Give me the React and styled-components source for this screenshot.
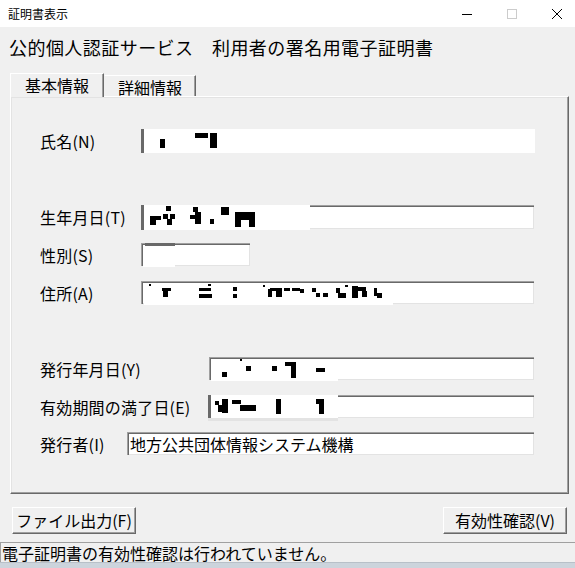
import React from "react";
import styled, { createGlobalStyle } from "styled-components";

const Global = createGlobalStyle`
  html, body { margin: 0; padding: 0; background: #f0f0f0; }
  body { font-family: "Noto Sans CJK JP", "Noto Sans", sans-serif; }
  * { box-sizing: border-box; }
`;

const Window = styled.div`
  width: 575px;
  height: 568px;
  display: flex;
  flex-direction: column;
  overflow: hidden;
  background: #f0f0f0;
  color: #000;
`;

const TitleBar = styled.div`
  height: 27px;
  flex: none;
  background: #fff;
  display: flex;
  align-items: center;
  justify-content: space-between;
  padding: 0 13px 0 8px;
`;

const TitleText = styled.span`
  font-size: 12px;
  line-height: 14px;
  color: #000;
`;

const Controls = styled.div`
  display: flex;
  align-items: center;
  gap: 35px;
`;

const CtlIcon = styled.svg`
  width: 10px;
  height: 10px;
  display: block;
`;

const Heading = styled.h1`
  margin: 0;
  padding: 9px 0 0 9px;
  height: 46px;
  font-size: 18px;
  line-height: 22px;
  font-weight: 400;
  letter-spacing: 0.45px;
  white-space: nowrap;
`;

const TabRow = styled.div`
  display: flex;
  align-items: flex-end;
  margin-left: 10px;
  height: 23px;
  flex: none;
`;

const Tab = styled.div`
  position: relative;
  z-index: ${(p) => (p.$active ? 2 : 1)};
  width: ${(p) => p.$w}px;
  height: ${(p) => (p.$active ? 24 : 21)}px;
  margin-bottom: ${(p) => (p.$active ? -1 : 0)}px;
  background: #f0f0f0;
  border-top: 1px solid #fff;
  border-left: 1px solid ${(p) => (p.$active ? "#fff" : "#f0f0f0")};
  box-shadow: inset -1px 0 #a0a0a0;
  border-right: 1px solid #696969;
  font-size: 16px;
  line-height: 18px;
  display: flex;
  justify-content: center;
  padding-top: 2px;
`;

const Panel = styled.div`
  margin-left: 10px;
  width: 559px;
  height: 398px;
  flex: none;
  border-top: 1px solid #fff;
  border-left: 1px solid #fff;
  border-right: 1px solid #696969;
  border-bottom: 1px solid #696969;
  box-shadow: inset -1px -1px #a0a0a0, inset 1px 1px #e3e3e3;
  padding-left: 29px;
  display: flex;
  flex-direction: column;
`;

const Row = styled.div`
  display: flex;
  align-items: center;
  margin-top: ${(p) => p.$mt}px;
  height: ${(p) => p.$h}px;
`;

const Label = styled.div`
  width: ${(p) => p.$w}px;
  flex: none;
  font-size: 16px;
  line-height: 18px;
  letter-spacing: 0.2px;
  white-space: nowrap;
`;

const Field = styled.div`
  position: relative;
  width: ${(p) => p.$w}px;
  height: 100%;
  background: #fff;
  box-shadow: ${(p) =>
    p.$plain
      ? "none"
      : "inset 1px 1px #a0a0a0, inset 2px 2px #696969, inset -1px -1px #e3e3e3"};
  font-size: 16px;
  line-height: 18px;
  padding: 3px 0 0 3px;
  white-space: nowrap;
`;

const Mask = styled.div`
  position: absolute;
  background: #fff;
`;

const Bar = styled.div`
  position: absolute;
  background: ${(p) => p.$c};
`;

const Block = styled.div`
  position: absolute;
  background: #000;
`;

const ButtonRow = styled.div`
  display: flex;
  justify-content: space-between;
  padding: 0 8px 0 12px;
  margin-top: 13px;
  height: 27px;
  flex: none;
`;

const Button = styled.div`
  width: 124px;
  height: 27px;
  background: #f0f0f0;
  border-top: 1px solid #fff;
  border-left: 1px solid #fff;
  border-right: 1px solid #696969;
  border-bottom: 1px solid #696969;
  box-shadow: inset -1px -1px #a0a0a0;
  font-size: 16px;
  line-height: 18px;
  display: flex;
  align-items: center;
  justify-content: center;
  padding-bottom: 1px;
  white-space: nowrap;
`;

const StatusBar = styled.div`
  margin-top: 8px;
  height: 20px;
  flex: none;
  border-top: 1px solid #a0a0a0;
  border-left: 1px solid #a0a0a0;
  font-size: 16px;
  line-height: 18px;
  padding: 1px 0 0 1px;
  white-space: nowrap;
`;

const Strip = styled.div`
  flex: 1;
  background: #ccd4dc;
  border-top: 1px solid #b8c0c8;
`;

const fields = [
  {
    label: "氏名(N)", x: 141, y: 129, w: 394, h: 24, mt: 32, plain: true,
    masks: [{ x: 141, y: 129, w: 394, h: 24, bars: [{ x: 141, y: 129, w: 3, h: 24, c: "#696969" }] }],
    blocks: [[160, 139, 5, 9], [195, 133, 13, 5], [210, 133, 7, 15]],
  },
  {
    label: "生年月日(T)", x: 141, y: 205, w: 393, h: 24, mt: 52,
    masks: [{ x: 141, y: 205, w: 169, h: 25, bars: [{ x: 141, y: 205, w: 3, h: 25, c: "#696969" }] }],
    blocks: [
      [150, 216, 6, 9], [150, 216, 11, 4], [163, 214, 5, 5], [170, 214, 5, 5], [167, 219, 5, 6],
      [166, 206, 5, 5], [193, 207, 5, 5], [195, 212, 6, 12], [190, 215, 5, 4], [210, 219, 4, 5],
      [221, 207, 8, 8], [235, 212, 20, 5], [235, 212, 6, 15], [249, 212, 6, 15], [241, 216, 8, 4],
    ],
  },
  {
    label: "性別(S)", x: 141, y: 243, w: 109, h: 23, mt: 14,
    masks: [{ x: 143, y: 246, w: 32, h: 21, bars: [] }],
    bars: [{ x: 145, y: 243, w: 30, h: 3, c: "#696969" }],
    blocks: [],
  },
  {
    label: "住所(A)", x: 141, y: 281, w: 393, h: 23, mt: 15,
    masks: [{ x: 144, y: 283, w: 249, h: 22, bars: [] }],
    blocks: [
      [149, 284, 2, 2], [162, 288, 9, 3], [163, 291, 5, 6], [199, 288, 12, 3], [199, 294, 13, 4],
      [208, 284, 3, 2], [233, 287, 4, 4], [233, 294, 4, 4], [263, 285, 2, 2], [268, 289, 4, 8],
      [270, 288, 12, 3], [276, 291, 6, 6], [284, 288, 6, 3], [292, 288, 8, 3], [300, 289, 4, 4],
      [312, 288, 4, 4], [316, 293, 4, 4], [323, 293, 5, 4], [336, 288, 4, 5], [338, 293, 8, 5],
      [345, 285, 3, 2], [352, 286, 6, 12], [358, 287, 8, 4], [362, 291, 5, 6], [374, 288, 3, 8],
      [377, 293, 5, 5],
    ],
  },
  {
    label: "発行年月日(Y)", x: 209, y: 357, w: 325, h: 23, mt: 53,
    masks: [{ x: 211, y: 359, w: 127, h: 22, bars: [] }],
    blocks: [[240, 359, 2, 2], [222, 372, 5, 5], [246, 366, 5, 5], [272, 366, 5, 5], [285, 362, 11, 4], [291, 362, 5, 16], [316, 368, 9, 4]],
  },
  {
    label: "有効期間の満了日(E)", x: 208, y: 395, w: 326, h: 23, mt: 15,
    masks: [{ x: 208, y: 395, w: 130, h: 23, bars: [{ x: 208, y: 395, w: 3, h: 23, c: "#696969" }] }],
    bars: [{ x: 208, y: 418, w: 130, h: 3, c: "#e3e3e3" }],
    blocks: [[215, 401, 4, 4], [218, 405, 5, 7], [222, 399, 6, 14], [232, 400, 9, 4], [240, 405, 16, 6], [276, 399, 5, 15], [316, 399, 8, 5], [319, 399, 5, 15]],
  },
  {
    label: "発行者(I)", x: 127, y: 432, w: 407, h: 23, mt: 14,
    text: "地方公共団体情報システム機構", masks: [], blocks: [],
  },
];

function FieldRow({ f }) {
  return (
    <Row $mt={f.mt} $h={f.h}>
      <Label $w={f.x - 40}>{f.label}</Label>
      <Field $w={f.w} $plain={f.plain}>
        {f.text}
        {(f.bars || []).map((b, i) => (
          <Bar key={"b" + i} $c={b.c} style={{ left: b.x - f.x, top: b.y - f.y, width: b.w, height: b.h }} />
        ))}
        {f.masks.map((m, i) => (
          <Mask key={"m" + i} style={{ left: m.x - f.x, top: m.y - f.y, width: m.w, height: m.h }}>
            {m.bars.map((b, j) => (
              <Bar key={j} $c={b.c} style={{ left: b.x - m.x, top: b.y - m.y, width: b.w, height: b.h }} />
            ))}
          </Mask>
        ))}
        {f.blocks.map(([x, y, w, h], i) => (
          <Block key={"k" + i} style={{ left: x - f.x, top: y - f.y, width: w, height: h }} />
        ))}
      </Field>
    </Row>
  );
}

export default function App() {
  return (
    <>
      <Global />
      <Window>
        <TitleBar>
          <TitleText>証明書表示</TitleText>
          <Controls>
            <CtlIcon viewBox="0 0 10 10">
              <line x1="0" y1="5.5" x2="10" y2="5.5" stroke="#000" strokeWidth="1" />
            </CtlIcon>
            <CtlIcon viewBox="0 0 10 10">
              <rect x="0.5" y="0.5" width="9" height="9" fill="none" stroke="#cccccc" strokeWidth="1" />
            </CtlIcon>
            <CtlIcon viewBox="0 0 10 10">
              <path d="M0 0 L10 10 M10 0 L0 10" stroke="#000" strokeWidth="1" />
            </CtlIcon>
          </Controls>
        </TitleBar>
        <Heading>公的個人認証サービス　利用者の署名用電子証明書</Heading>
        <TabRow>
          <Tab $active $w={94}>基本情報</Tab>
          <Tab $w={92}>詳細情報</Tab>
        </TabRow>
        <Panel>
          {fields.map((f, i) => (
            <FieldRow key={i} f={f} />
          ))}
        </Panel>
        <ButtonRow>
          <Button>ファイル出力(F)</Button>
          <Button>有効性確認(V)</Button>
        </ButtonRow>
        <StatusBar>電子証明書の有効性確認は行われていません。</StatusBar>
        <Strip />
      </Window>
    </>
  );
}
